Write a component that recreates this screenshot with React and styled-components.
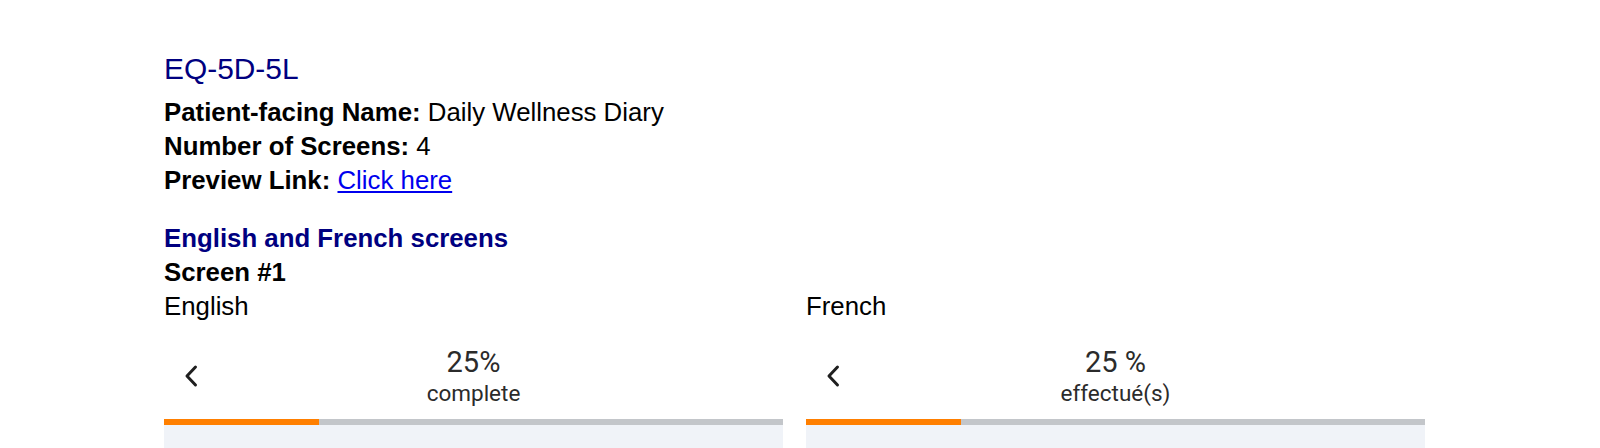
import React from 'react'
import styled, { createGlobalStyle } from 'styled-components'

const GlobalStyle = createGlobalStyle`
  html, body {
    margin: 0;
    padding: 0;
    background: #fff;
  }
  body {
    font-family: "Liberation Sans", Arial, sans-serif;
    color: #000;
  }
`

const Page = styled.div`
  padding: 51px 0 0 164px;
  height: 448px;
  box-sizing: border-box;
  overflow: hidden;
`

const Title = styled.h3`
  margin: 0 0 8px 0;
  font-size: 29.9px;
  line-height: 36px;
  font-weight: 400;
  color: #000080;
`

const InfoLine = styled.div`
  font-size: 25.8px;
  line-height: 34px;

  b {
    font-weight: 700;
  }

  a {
    color: #0000ee;
    text-decoration: underline;
  }
`

const SectionTitle = styled.div`
  margin-top: 24px;
  font-size: 25.8px;
  line-height: 34px;
  font-weight: 700;
  color: #000080;
`

const ScreenTitle = styled.div`
  font-size: 25.8px;
  line-height: 34px;
  font-weight: 700;
`

const Columns = styled.div`
  display: grid;
  grid-template-columns: 619px 619px;
  column-gap: 23px;
`

const Column = styled.div`
  display: flex;
  flex-direction: column;
`

const LangLabel = styled.div`
  font-size: 25.8px;
  line-height: 34px;
`

const Phone = styled.div`
  font-family: Roboto, "Noto Sans", sans-serif;
  color: #2b2b2b;
`

const Header = styled.div`
  position: relative;
  height: 96px;
  padding-top: 13px;
  box-sizing: border-box;
  display: flex;
  align-items: center;
  justify-content: center;
`

const BackButton = styled.div`
  position: absolute;
  left: 19px;
  top: 40px;
  width: 16px;
  height: 26px;
  display: flex;
  align-items: center;
  justify-content: center;
`

const Progress = styled.div`
  display: flex;
  flex-direction: column;
  align-items: center;
`

const Percent = styled.div`
  font-size: 29px;
  line-height: 31px;
  font-weight: 400;
`

const Caption = styled.div`
  font-size: 22.5px;
  line-height: 31px;
  font-weight: 400;
`

const Track = styled.div`
  height: 6px;
  background: #c3c6ca;
  display: flex;
`

const Fill = styled.div`
  background: #ff7f00;
  height: 100%;
`

const Body = styled.div`
  height: 200px;
  background: #f0f3f8;
`

const Chevron = () => (
  <svg width="16" height="26" viewBox="0 0 16 26" fill="none">
    <path d="M12.5 4 L4 13 L12.5 22" stroke="#1f1f1f" strokeWidth="3" strokeLinecap="round" strokeLinejoin="round" />
  </svg>
)

const Preview = ({ label, percent, caption, value }) => (
  <Column>
    <LangLabel>{label}</LangLabel>
    <Phone>
      <Header>
        <BackButton><Chevron /></BackButton>
        <Progress>
          <Percent>{percent}</Percent>
          <Caption>{caption}</Caption>
        </Progress>
      </Header>
      <Track>
        <Fill style={{ width: `${value}%` }} />
      </Track>
      <Body />
    </Phone>
  </Column>
)

const App = () => {
  return (
    <>
      <GlobalStyle />
      <Page>
        <Title>EQ-5D-5L</Title>
        <InfoLine><b>Patient-facing Name:</b> Daily Wellness Diary</InfoLine>
        <InfoLine><b>Number of Screens:</b> 4</InfoLine>
        <InfoLine><b>Preview Link:</b> <a href="#preview">Click here</a></InfoLine>
        <SectionTitle>English and French screens</SectionTitle>
        <ScreenTitle>Screen #1</ScreenTitle>
        <Columns>
          <Preview label="English" percent="25%" caption="complete" value={25} />
          <Preview label="French" percent={'25\u00a0%'} caption="effectué(s)" value={25} />
        </Columns>
      </Page>
    </>
  )
}

export default App
